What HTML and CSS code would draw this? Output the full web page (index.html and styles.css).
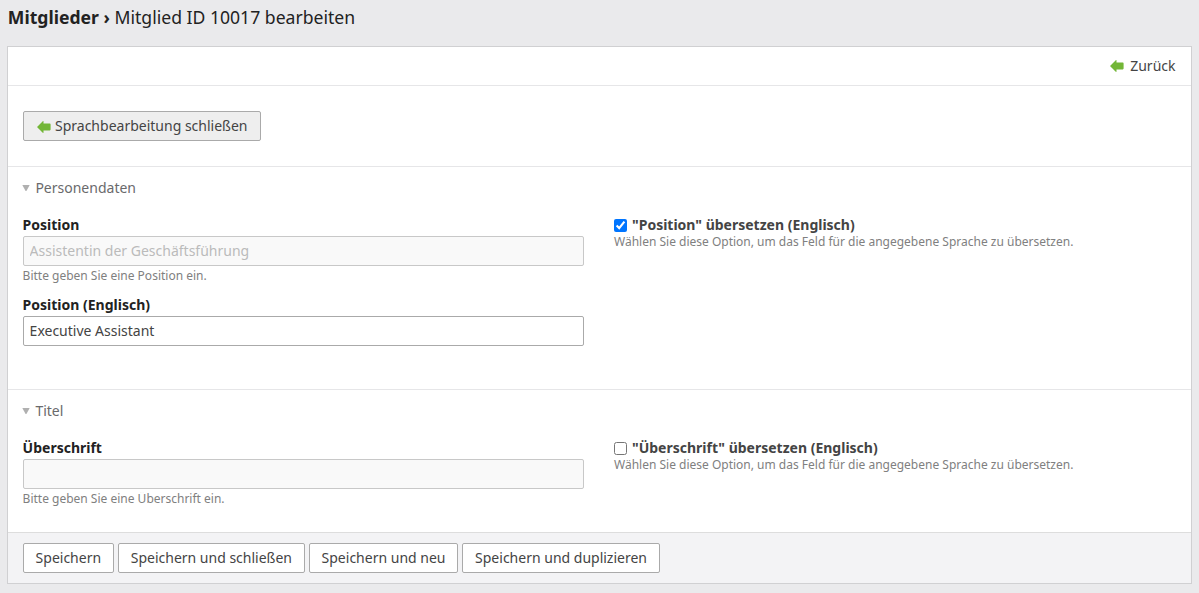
FILE: index.html
```html
<!DOCTYPE html>
<html lang="de">
<head>
<meta charset="utf-8">
<title>Mitglied ID 10017 bearbeiten</title>
<link rel="stylesheet" href="styles.css">
</head>
<body>
<h1 class="headline"><strong>Mitglieder ›</strong> Mitglied ID 10017 bearbeiten</h1>
<main class="panel">
  <div class="toolbar"><a class="back"><svg class="arrow" width="14" height="12" viewBox="0 0 14 12"><path d="M0 6 6 0 6.5.3V2.6H12.8Q13.6 2.6 13.6 3.4V8.6Q13.6 9.4 12.8 9.4H6.5v2.3L6 12z"/></svg>Zurück</a></div>
  <div class="language"><button class="btn btn-lang"><svg class="arrow" width="14" height="12" viewBox="0 0 14 12"><path d="M0 6 6 0 6.5.3V2.6H12.8Q13.6 2.6 13.6 3.4V8.6Q13.6 9.4 12.8 9.4H6.5v2.3L6 12z"/></svg>Sprachbearbeitung schließen</button></div>
  <section class="group group-person">
    <h2 class="legend"><svg width="8" height="6" viewBox="0 0 8 6"><path d="M.3 0h7.4L4.4 6h-.8z"/></svg>Personendaten</h2>
    <div class="columns">
      <div class="field">
        <label class="label" for="pos">Position</label>
        <input class="text" id="pos" disabled value="Assistentin der Geschäftsführung">
        <p class="help">Bitte geben Sie eine Position ein.</p>
      </div>
      <div class="field">
        <label class="check"><input type="checkbox" checked>"Position" übersetzen (Englisch)</label>
        <p class="help">Wählen Sie diese Option, um das Feld für die angegebene Sprache zu übersetzen.</p>
      </div>
      <div class="field">
        <label class="label" for="posen">Position (Englisch)</label>
        <input class="text" id="posen" value="Executive Assistant">
      </div>
    </div>
  </section>
  <section class="group group-title">
    <h2 class="legend"><svg width="8" height="6" viewBox="0 0 8 6"><path d="M.3 0h7.4L4.4 6h-.8z"/></svg>Titel</h2>
    <div class="columns">
      <div class="field">
        <label class="label" for="head">Überschrift</label>
        <input class="text" id="head" disabled>
        <p class="help help-clipped">Bitte geben Sie eine Überschrift ein.</p>
      </div>
      <div class="field">
        <label class="check"><input type="checkbox">"Überschrift" übersetzen (Englisch)</label>
        <p class="help">Wählen Sie diese Option, um das Feld für die angegebene Sprache zu übersetzen.</p>
      </div>
    </div>
  </section>
  <footer class="submit">
    <button class="btn">Speichern</button>
    <button class="btn">Speichern und schließen</button>
    <button class="btn">Speichern und neu</button>
    <button class="btn">Speichern und duplizieren</button>
  </footer>
</main>
</body>
</html>
```
FILE: styles.css
```css
* { box-sizing: border-box; }
body { margin: 0; padding: 0 7px; height: 593px; overflow: hidden; background: #eaeaec; color: #222; font: 14px/20px "Noto Sans", sans-serif; }
.headline { margin: 0; padding: 5px .8px 0; height: 46px; font-size: 17.6px; line-height: 24px; font-weight: 400; }
.headline strong { font-weight: 700; }
.panel { width: 1185px; height: 538px; background: #fff; border: 1px solid #d0d0d2; }
.toolbar { height: 39px; padding: 9px 15.5px; border-bottom: 1px solid #e6e6e8; text-align: right; }
.back { display: inline-flex; align-items: center; gap: 6px; color: #444; }
.arrow { fill: #73b637; flex: none; }
.language { height: 80px; padding: 25px 15px; }
.btn { height: 30px; padding: 0 12px; border: 1px solid #aaa; border-radius: 2px; background: #fff; color: #444; font: 14px/20px "Noto Sans", sans-serif; }
.btn-lang { display: flex; align-items: center; gap: 4px; padding: 0 13px; background: #eee; color: #444; width: 238px; white-space: nowrap; }
.btn-lang .arrow { position: relative; top: 1px; }
.group { padding: 11px 14.6px 0; border-top: 1px solid #e6e6e8; }
.group-person { height: 223px; }
.group-title { height: 143px; }
.legend { display: flex; align-items: center; gap: 5.4px; margin: 0 0 17px -.6px; font-size: 14px; font-weight: 400; color: #6a6a6c; }
.legend svg { fill: #b0b0b0; }
.columns { display: grid; grid-template-columns: 561.4px 561px; column-gap: 30px; row-gap: 11px; }
.label, .check { display: block; height: 21px; font-weight: 700; }
.check { display: flex; height: 18px; color: #444; }
.check input { width: 13px; height: 13px; margin: 4px 5px 0 0; }
.text { display: block; width: 100%; height: 30px; padding: 0 6px 2px; border: 1px solid #aaa; border-radius: 2px; background: #fff; color: #444; font: 14px/20px "Noto Sans", sans-serif; }
.text:disabled { background: #f9f9f9; border-color: #c8c8c8; color: #bbb; }
.help { margin: 2px 0 0; font-size: 12px; line-height: 16px; color: #808080; }
.help-clipped { margin-top: 3px; line-height: 14px; padding-bottom: 2px; overflow: hidden; }
.check + .help { margin-top: 1px; }
.submit { display: flex; gap: 3.6px; height: 51px; padding: 10px 14.6px; background: #f3f3f5; border-top: 1px solid #ddd; }
```
